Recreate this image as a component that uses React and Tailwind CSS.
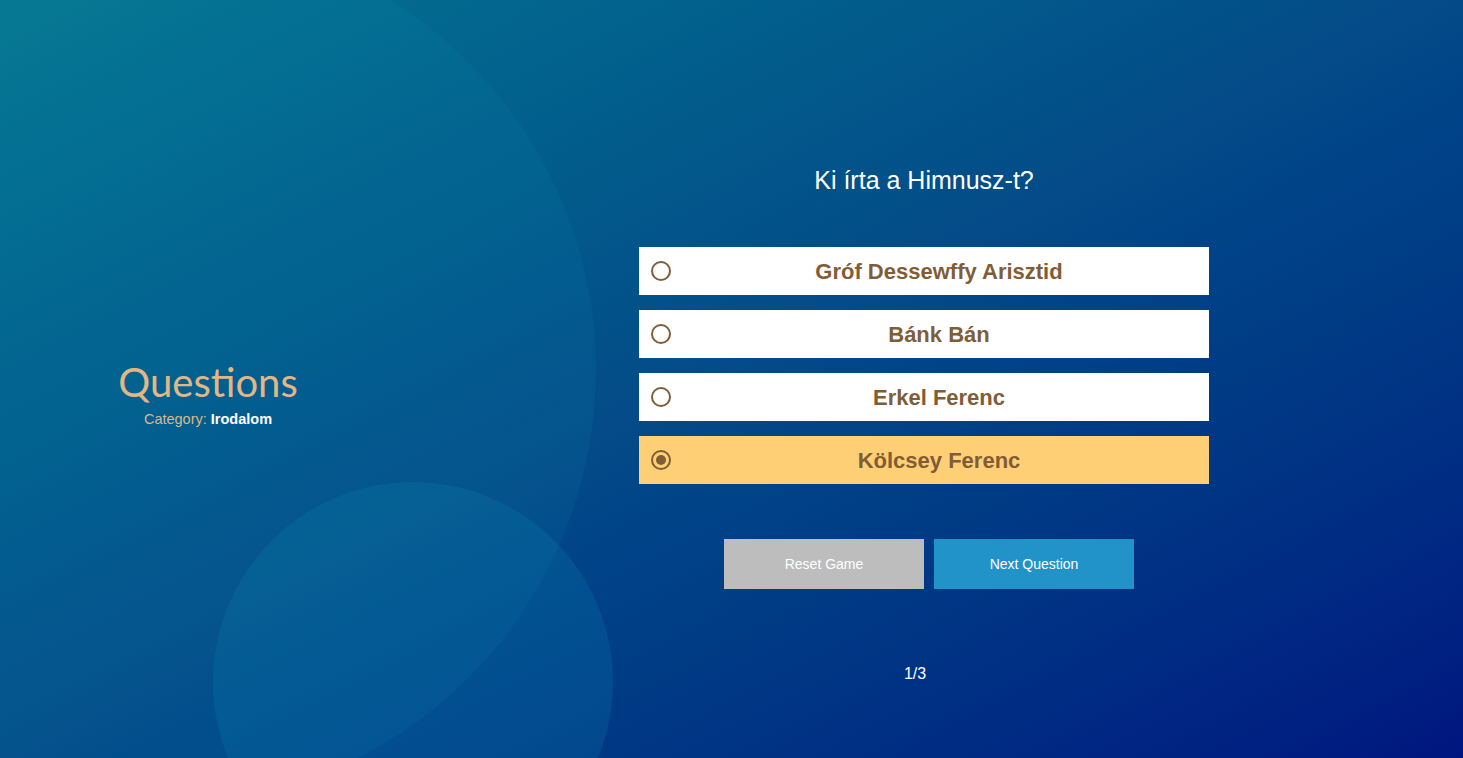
import React, { useState } from 'react';

const options = ['Gróf Dessewffy Arisztid', 'Bánk Bán', 'Erkel Ferenc', 'Kölcsey Ferenc'];

const App = () => {
  const [selected, setSelected] = useState(3);

  return (
    <div className="relative h-[758px] w-full overflow-hidden bg-gradient-to-br from-[#067690] via-[#044a88] to-[#001580] font-['Liberation_Sans',Arial,sans-serif]">
      {/* decorative circles */}
      <div className="absolute left-[-274px] top-[-65px] h-[870px] w-[870px] rounded-full bg-[#0c8cb4]/[0.13]" />
      <div className="absolute left-[213px] top-[482px] h-[400px] w-[400px] rounded-full bg-[#0c8cb4]/[0.2]" />

      <div className="relative flex h-full">
        <div className="flex w-[416px] flex-col items-center justify-center pt-[30px]">
          <h1 className="font-['Lato',sans-serif] text-[40px] leading-[48px] text-[#e2b784]">Questions</h1>
          <p className="mt-[3px] text-[14.5px] text-[#dcb787]">
            Category: <span className="font-bold text-white">Irodalom</span>
          </p>
        </div>

        <div className="ml-[223px] flex w-[570px] flex-col items-center">
          <h2 className="mt-[165px] text-[25px] leading-[30px] text-white">Ki írta a Himnusz-t?</h2>

          <div className="mt-[52px] flex w-full flex-col gap-[15px]">
            {options.map((opt, i) => (
              <button
                key={opt}
                onClick={() => setSelected(i)}
                className={`relative flex h-[48px] w-full items-center justify-center pl-[30px] ${selected === i ? 'bg-[#ffcf75]' : 'bg-white'}`}
              >
                <span className="absolute left-[12px] top-[14px] flex h-[20px] w-[20px] items-center justify-center rounded-full border-2 border-[#7f5d36]">
                  {selected === i && <span className="h-[10px] w-[10px] rounded-full bg-[#7f5d36]" />}
                </span>
                <span className="text-[22px] font-bold text-[#7f5d36]">{opt}</span>
              </button>
            ))}
          </div>

          <div className="mt-[55px] flex gap-[10px] pl-[10px]">
            <button className="h-[50px] w-[200px] bg-[#bdbdbd] text-[14px] text-white">Reset Game</button>
            <button className="h-[50px] w-[200px] bg-[#2293c9] text-[14px] text-white">Next Question</button>
          </div>

          <p className="mt-[73px] pr-[18px] text-[16px] text-white">1/3</p>
        </div>
      </div>
    </div>
  );
};

export default App;
